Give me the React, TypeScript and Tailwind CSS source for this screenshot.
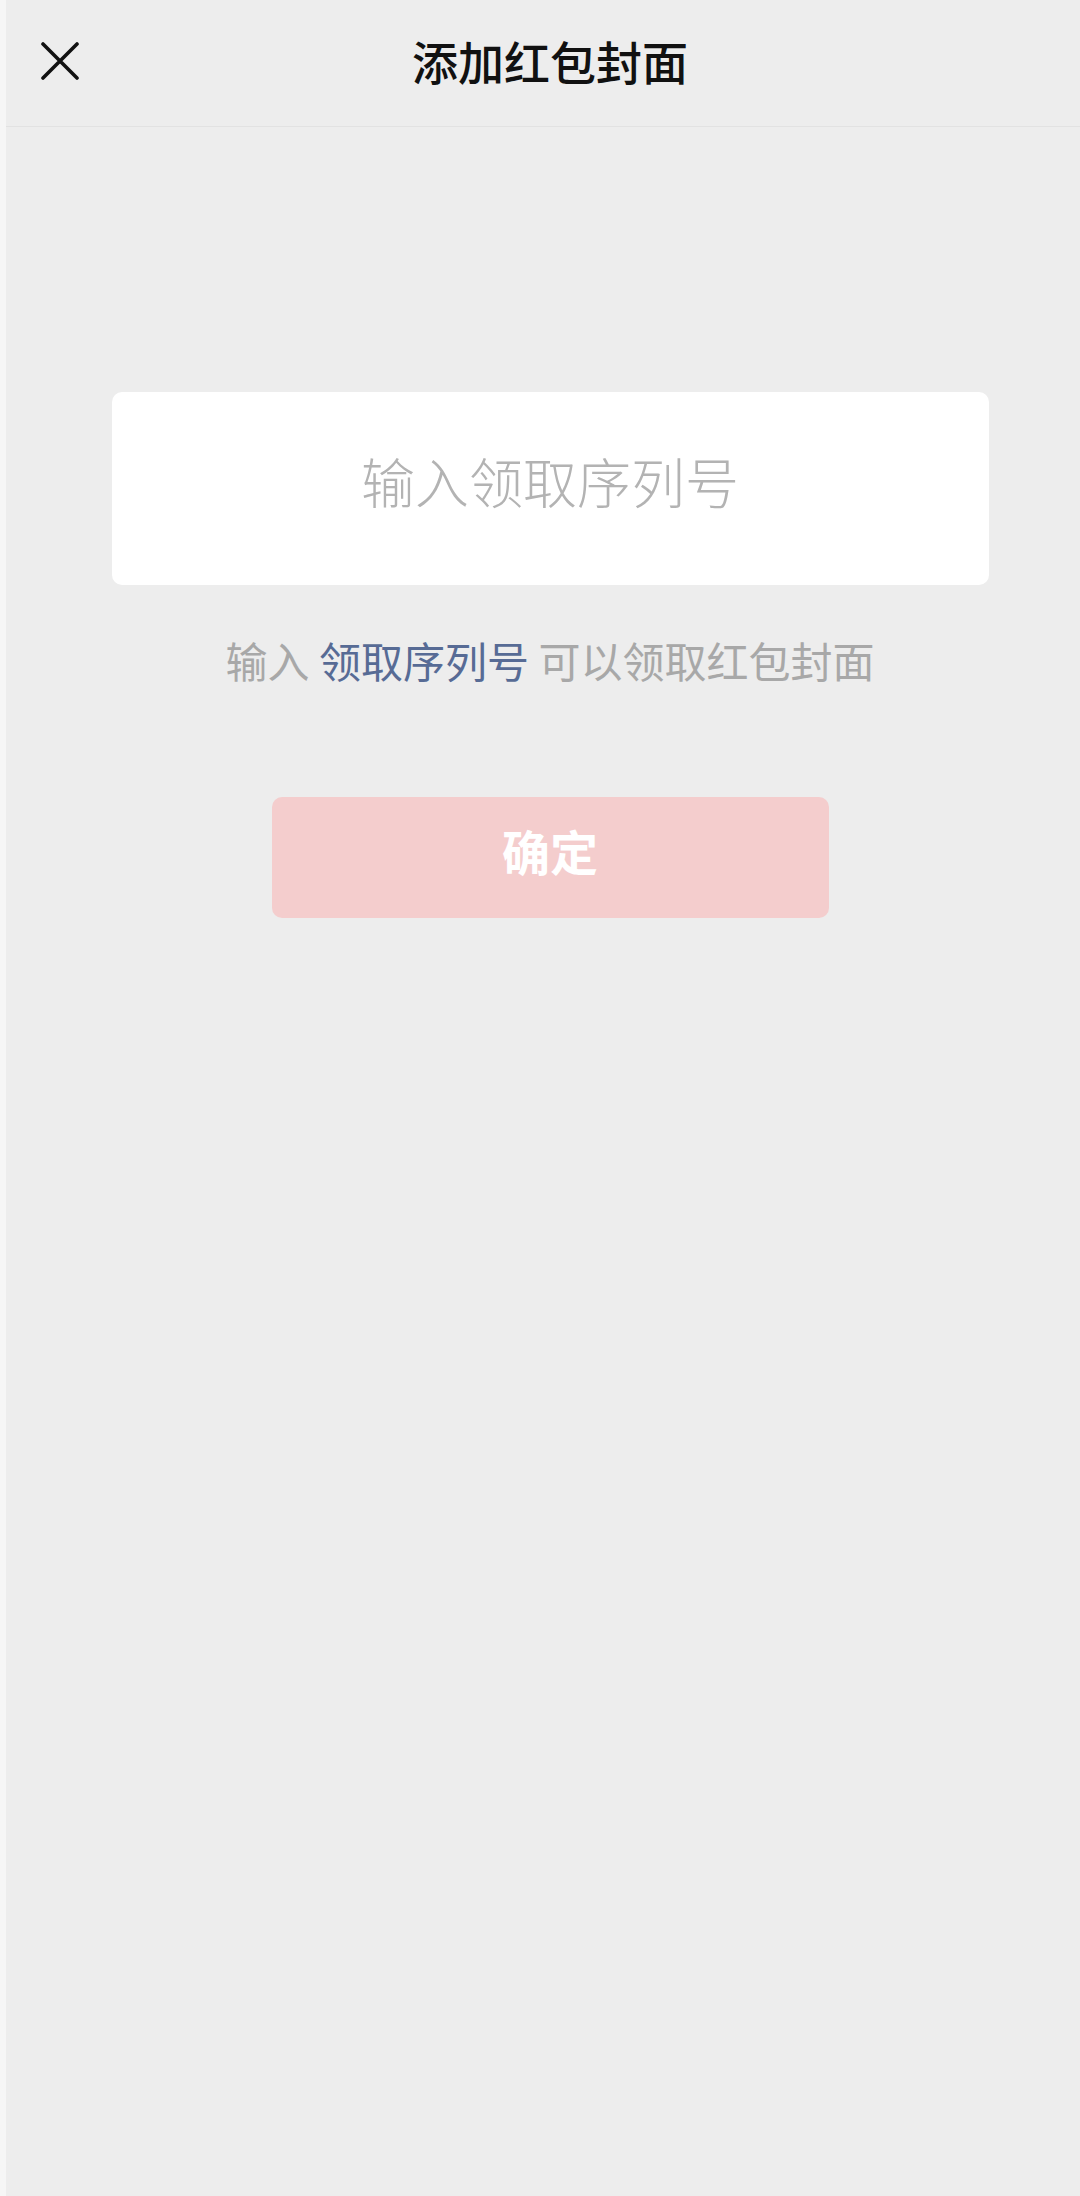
import React from 'react'

const FONT = { fontFamily: '"Noto Sans CJK SC", "Noto Sans", sans-serif' }

//---------------------------------------------------
// ICON
//---------------------------------------------------
function CloseIcon() {
  return (
    <svg width="38" height="38" viewBox="0 0 38 38" fill="none">
      <path d="M2 2 L36 36 M36 2 L2 36" stroke="#111111" strokeWidth="3.6" strokeLinecap="round" />
    </svg>
  )
}

//---------------------------------------------------
// MAIN COMPONENT
//---------------------------------------------------
export default function App() {
  return (
    <div className="flex min-h-[2196px] w-[1080px] overflow-hidden bg-[#ededed]" style={FONT}>
      {/* Left edge strip */}
      <div className="w-[6px] shrink-0 bg-[#f6f6f6]" />

      <div className="w-[1088px] shrink-0 flex flex-col">
        {/* Header */}
        <div className="relative h-[127px] flex items-center justify-center border-b border-[#e2e2e2] pb-[6px]">
          <button className="absolute left-[35px] top-[42px]" title="关闭">
            <CloseIcon />
          </button>
          <h1 className="text-[46px] leading-none font-medium text-[#111111]">添加红包封面</h1>
        </div>

        {/* Input card */}
        <div className="mt-[265px] mx-auto w-[877px] h-[193px] rounded-[10px] bg-white flex items-center justify-center pb-[16px]">
          <span className="text-[54px] leading-none font-light text-[#b3b3b3]">输入领取序列号</span>
        </div>

        {/* Hint */}
        <p className="mt-[54px] text-center text-[42px] leading-[42px] text-[#a8a8a8]">
          输入 <span className="text-[#576b95]">领取序列号</span> 可以领取红包封面
        </p>

        {/* Confirm button */}
        <button className="mt-[116px] mx-auto w-[557px] h-[121px] rounded-[10px] bg-[#f4cdcd] flex items-center justify-center pb-[16px]">
          <span className="text-[48px] leading-none font-bold text-white">确定</span>
        </button>
      </div>
    </div>
  )
}
